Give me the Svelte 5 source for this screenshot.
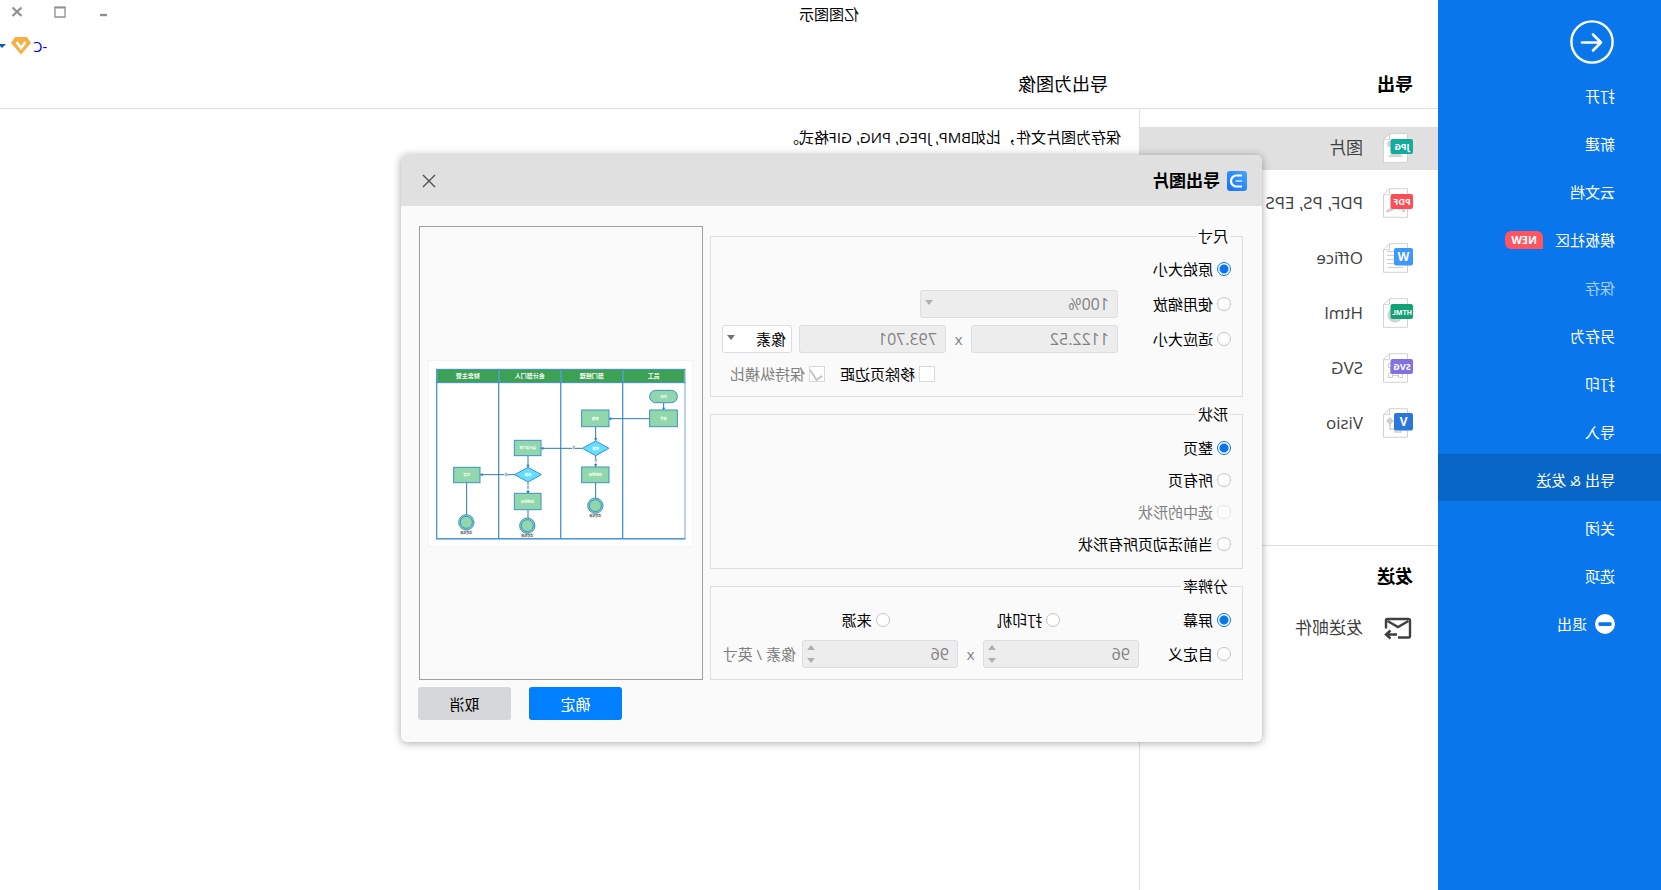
<script lang="ts">
  const menu = [
    { label: '打开' },
    { label: '新建' },
    { label: '云文档' },
    { label: '模板社区', badge: 'NEW' },
    { label: '保存', disabled: true },
    { label: '另存为' },
    { label: '打印' },
    { label: '导入' },
    { label: '导出 & 发送' },
    { label: '关闭' },
    { label: '选项' },
    { label: '退出', icon: true },
  ]

  const formats = [
    { label: '图片', tag: 'JPG', color: '#14ab9c' },
    { label: 'PDF, PS, EPS', tag: 'PDF', color: '#ff4d55' },
    { label: 'Office', tag: 'W', color: '#3e98fc' },
    { label: 'Html', tag: 'HTML', color: '#12a275' },
    { label: 'SVG', tag: 'SVG', color: '#8371e2' },
    { label: 'Visio', tag: 'V', color: '#2b76d9' },
  ]

  const shapes = [
    { value: 'page', label: '整页' },
    { value: 'all', label: '所有页' },
    { value: 'selected', label: '选中的形状', disabled: true },
    { value: 'active', label: '当前活动页所有形状' },
  ]

  const lanes = [
    { x: 118, label: '员工' },
    { x: 304, label: '部门经理' },
    { x: 490, label: '会计部门人' },
    { x: 676, label: '财务主管' },
  ]

  const boxes = [
    { x: 47, y: 150, w: 83, h: 50, label: '填写' },
    { x: 252, y: 150, w: 82, h: 50, label: '审核' },
    { x: 252, y: 321, w: 82, h: 47, label: '说明原因' },
    { x: 456, y: 241, w: 80, h: 46, label: '会计部门审' },
    { x: 456, y: 400, w: 80, h: 49, label: '说明原因' },
    { x: 639, y: 322, w: 79, h: 46, label: '付款' },
  ]

  const diamonds = [
    { x: 292, y: 265 },
    { x: 495, y: 344 },
  ]

  const ends = [
    { x: 293, y: 437 },
    { x: 497, y: 497 },
    { x: 680, y: 487 },
  ]

  let activeMenu = $state('导出 & 发送')
  let activeFormat = $state('图片')
  let size = $state('original')
  let shape = $state('page')
  let resolution = $state('screen')
  let removeMargin = $state(false)
  let unit = $state('像素')
  let open = $state(true)
</script>

<div class="app" lang="zh-CN">
  <nav class="sidebar">
    <button class="back" aria-label="返回">
      <svg width="44" height="44" viewBox="0 0 44 44" fill="none" stroke="#fff" stroke-width="2.4">
        <circle cx="22" cy="22" r="20.6" />
        <path d="M32 22.5H14M21 14.5l-8 8 8 8" stroke-linecap="round" stroke-linejoin="round" stroke-width="2.6" />
      </svg>
    </button>
    {#each menu as item}
      <button
        class="menu-item"
        class:active={activeMenu === item.label}
        disabled={item.disabled}
        onclick={() => (activeMenu = item.label)}
      >
        {#if item.icon}
          <svg width="20" height="20" viewBox="0 0 20 20">
            <circle cx="10" cy="10" r="10" fill="#fff" />
            <rect x="3.5" y="8.3" width="13" height="3.6" rx="1" fill="#0977eb" />
          </svg>
        {/if}
        <span>{item.label}</span>
        {#if item.badge}<span class="badge">{item.badge}</span>{/if}
      </button>
    {/each}
  </nav>

  <div class="main">
    <header>
      <div class="titlebar">
        <span class="title">亿图图示</span>
        <div class="controls">
          <button aria-label="最小化">
            <svg width="12" height="12" viewBox="0 0 12 12"><path d="M2 9h7" stroke="#909090" stroke-width="2.4" /></svg>
          </button>
          <button aria-label="最大化">
            <svg width="12" height="12" viewBox="0 0 12 12"><path d="M1 1.5h10v9.5H1z" fill="none" stroke="#909090" stroke-width="1.3" /><path d="M.4 1.4h11.2" stroke="#909090" stroke-width="1.8" /></svg>
          </button>
          <button aria-label="关闭">
            <svg width="12" height="12" viewBox="0 0 12 12"><path d="M1.5 1.5l9 8.5M10.5 1.5l-9 8.5" stroke="#909090" stroke-width="2.2" /></svg>
          </button>
        </div>
      </div>
      <div class="account">
        <a href="#account">-C</a>
        <svg width="20" height="18" viewBox="0 0 20 18">
          <path d="M4 0h12l4 6-10 11.5L0 6z" fill="#f3b044" />
          <path d="M5.5 5l4.5 6L14.5 5" fill="none" stroke="#fff" stroke-width="2.6" />
        </svg>
        <svg class="account-caret" width="6" height="4" viewBox="0 0 6 4"><path d="M0 0h8L4 4z" fill="#0a5cb8" /></svg>
      </div>
      <div class="headings">
        <h2>导出</h2>
        <h1>导出为图像</h1>
      </div>
    </header>

    <div class="columns">
      <aside>
        <ul>
          {#each formats as f}
            <li>
              <button class="format" class:active={activeFormat === f.label} onclick={() => (activeFormat = f.label)}>
                <svg width="30" height="30" viewBox="0 0 30 30">
                  <path d="M5.5 .7h18l6 6v22.6h-24z" fill="#fff" stroke="#d2d2d2" />
                  <path d="M23.5 .7v6h6" fill="none" stroke="#d2d2d2" />
                  {#if f.tag === 'JPG'}
                    <path d="M9 24c3-1 4-6 8-6s5 5 9 6z" fill="#d5d5d5" />
                    <circle cx="23" cy="11" r="3" fill="#d5d5d5" />
                  {:else if f.tag === 'PDF'}
                    <path d="M9 24c1-5 4-5 6-3M20 22c2-1 5 0 6 2" fill="none" stroke="#d0d0d0" stroke-width="3" />
                  {:else if f.tag === 'W'}
                    <path d="M10 24.5h15M18 8.5h8M18 12.5h8M18 16.5h8M18 20.5h8" stroke="#d0d0d0" />
                  {:else if f.tag === 'HTML'}
                    <circle cx="18" cy="17" r="7.5" fill="#d2d2d2" />
                  {:else if f.tag === 'SVG'}
                    <path d="M10.5 20.5h4v4h-4zM20.5 20.5h4v4h-4zM20.5 10.5h4v4h-4zM14.5 22.5h6M22.5 14v6" fill="none" stroke="#cfcfcf" />
                  {:else}
                    <path d="M12 21v3h6v-3M23 12v9h-5" fill="none" stroke="#cfcfcf" stroke-width="1.5" />
                    <path d="M23 9l4 4-4 4-4-4z" fill="#cfcfcf" />
                  {/if}
                  {#if f.tag.length === 1}
                    <rect y="5" width="19" height="17.5" rx="2" fill={f.color} />
                    <text x="9.5" y="18" class="tag-big">{f.tag}</text>
                  {:else}
                    <rect y="6" width="22.5" height="15" rx="2" fill={f.color} />
                    <text x="11" y="17" class="tag" class:long={f.tag.length > 3}>{f.tag}</text>
                  {/if}
                </svg>
                <span>{f.label}</span>
              </button>
            </li>
          {/each}
        </ul>
        <section class="send">
          <h2>发送</h2>
          <button class="format">
            <svg width="30" height="30" viewBox="0 0 30 30" fill="none" stroke="#404040" stroke-width="2.4">
              <path d="M15 24.5H4.5A1.5 1.5 0 0 1 3 23V7.5A1.5 1.5 0 0 1 4.5 6h21A1.5 1.5 0 0 1 27 7.5v8" />
              <path d="M4.5 8L15 14 25.500 8" />
              <path d="M16 21.5h10.5M22.5 17.5l4.5 4-4.5 4" />
            </svg>
            <span>发送邮件</span>
          </button>
        </section>
      </aside>
      <p class="desc">保存为图片文件，比如BMP, JPEG, PNG, GIF格式。</p>
    </div>
  </div>

  {#if open}
    <div class="overlay">
      <div class="dialog" role="dialog" aria-labelledby="dialog-title">
        <div class="dialog-head">
          <svg width="20" height="20" viewBox="0 0 20 20">
            <defs>
              <linearGradient id="logo" x1="0" y1="0" x2="1" y2="1">
                <stop offset="0" stop-color="#45a5ff" />
                <stop offset="1" stop-color="#1272f5" />
              </linearGradient>
            </defs>
            <rect width="20" height="20" rx="3" fill="url(#logo)" />
            <path d="M5 4.5h5.5a5.5 5.5 0 0 1 0 11H5" fill="none" stroke="#fff" stroke-width="2.2" />
            <path d="M5 10h6.5" stroke="#a8d2ff" stroke-width="1.8" />
          </svg>
          <h3 id="dialog-title">导出图片</h3>
          <button class="close" aria-label="关闭" onclick={() => (open = false)}>
            <svg width="14" height="14" viewBox="0 0 14 14"><path d="M1 1l12 12M13 1L1 13" stroke="#505050" stroke-width="1.4" /></svg>
          </button>
        </div>

        <div class="dialog-body">
          <div class="settings">
            <fieldset class="size">
              <legend>尺寸</legend>
              <label class="choice"><input type="radio" value="original" bind:group={size} />原始大小</label>
              <div class="row">
                <label class="choice first"><input type="radio" value="scale" bind:group={size} />使用缩放</label>
                <span class="select wide">
                  <select disabled={size !== 'scale'} aria-label="缩放"><option>100%</option></select>
                </span>
              </div>
              <div class="row">
                <label class="choice first"><input type="radio" value="fit" bind:group={size} />适应大小</label>
                <input class="field" value="1122.52" disabled={size !== 'fit'} aria-label="宽度" />
                <span class="times">x</span>
                <input class="field" value="793.701" disabled={size !== 'fit'} aria-label="高度" />
                <span class="select unit">
                  <select bind:value={unit} aria-label="单位"><option>像素</option><option>英寸</option></select>
                </span>
              </div>
              <div class="row checks">
                <label class="choice"><input type="checkbox" bind:checked={removeMargin} />移除页边距</label>
                <label class="choice disabled"><input type="checkbox" checked disabled />保持纵横比</label>
              </div>
            </fieldset>

            <fieldset class="shape">
              <legend>形状</legend>
              {#each shapes as s}
                <label class="choice" class:disabled={s.disabled}>
                  <input type="radio" value={s.value} disabled={s.disabled} bind:group={shape} />{s.label}
                </label>
              {/each}
            </fieldset>

            <fieldset class="resolution">
              <legend>分辨率</legend>
              <div class="thirds">
                <label class="choice"><input type="radio" value="screen" bind:group={resolution} />屏幕</label>
                <label class="choice"><input type="radio" value="printer" bind:group={resolution} />打印机</label>
                <label class="choice"><input type="radio" value="source" bind:group={resolution} />来源</label>
              </div>
              <div class="row">
                <label class="choice custom"><input type="radio" value="custom" bind:group={resolution} />自定义</label>
                <span class="spin"><input class="field" type="number" value="96" disabled={resolution !== 'custom'} aria-label="水平分辨率" /></span>
                <span class="times">x</span>
                <span class="spin"><input class="field" type="number" value="96" disabled={resolution !== 'custom'} aria-label="垂直分辨率" /></span>
                <span class="dpi">像素 / 英寸</span>
              </div>
            </fieldset>
          </div>

          <div class="preview">
            <svg width="265" height="187" viewBox="0 0 795 561">
              <rect x="1" y="1" width="793" height="559" fill="#fff" stroke="#f2f2f2" stroke-width="3" />
              <rect x="24" y="28" width="745" height="40" fill="#3ca055" />
              <path d="M24 27V537H769V27M211 27V537M397 27V537M583 27V537" fill="none" stroke="#8fbfe8" stroke-width="4" />
              <path d="M23 28H770M23 68H770M211 27V537M397 27V537M583 27V537M769 27V537M24 536H769" fill="none" stroke="#3f8fd0" stroke-width="3" />
              {#each lanes as lane}
                <text x={lane.x} y="54" class="lane">{lane.label}</text>
              {/each}
              <g stroke="#2a7ab8" stroke-width="3" fill="none">
                <path d="M88 128V150M130 176H252M292 200V243M292 287V321M333 265H456M292 368V414" />
                <path d="M495 287V321M495 367V400M534 344H639M495 449V474M679 368V464" />
              </g>
              <g fill="#2a7ab8">
                <path d="M83 143h10l-5 8zM287 235h10l-5 8zM287 313h10l-5 8zM490 314h10l-5 8zM490 393h10l-5 8zM245 171v10l8-5zM449 260v10l8-5zM631 339v10l8-5z" />
              </g>
              <rect x="47" y="91" width="83" height="37" rx="18" class="node" />
              <text x="88" y="113" class="node-text">开始</text>
              {#each boxes as b}
                <rect x={b.x} y={b.y} width={b.w} height={b.h} class="node" />
                <text x={b.x + b.w / 2} y={b.y + b.h / 2 + 4} class="node-text">{b.label}</text>
              {/each}
              {#each diamonds as d}
                <path d="M{d.x - 40} {d.y}l40 -22 40 22 -40 22z" class="decision" />
                <text x={d.x} y={d.y + 4} class="node-text">审核</text>
                <rect x={d.x - 6} y={d.y + 32} width="12" height="13" fill="#fff" />
                <text x={d.x} y={d.y + 42} class="note faint">否</text>
                <rect x={d.x + 62} y={d.y - 5} width="9" height="10" fill="#fff" />
                <text x={d.x + 66} y={d.y + 3} class="note faint">是</text>
              {/each}
              {#each ends as e}
                <circle cx={e.x} cy={e.y} r="23" class="node" />
                <circle cx={e.x} cy={e.y} r="18" class="node" />
                <text x={e.x} y={e.y + 34} class="note">流程结束</text>
              {/each}
            </svg>
          </div>
        </div>

        <div class="actions">
          <button class="ok">确定</button>
          <button onclick={() => (open = false)}>取消</button>
        </div>
      </div>
    </div>
  {/if}
</div>

<style>
  :global(body) { margin: 0; background: #fff; }

  /* the window is laid out left to right and shown flipped */
  .app {
    position: relative;
    display: flex;
    min-height: 100vh;
    overflow: hidden;
    transform: scaleX(-1);
    background: #fff;
    color: #000;
    font-family: "Open Sans", "Noto Sans CJK SC", sans-serif;
    font-size: 15px;
    line-height: 20px;
  }

  * { box-sizing: border-box; }
  h1, h2, h3, p, ul { margin: 0; padding: 0; }
  ul { list-style: none; }
  svg { display: block; flex-shrink: 0; }

  button {
    margin: 0;
    padding: 0;
    border: none;
    background: none;
    color: inherit;
    font: inherit;
    cursor: pointer;
  }

  .sidebar {
    flex: 0 0 223px;
    display: flex;
    flex-direction: column;
    gap: 1px;
    padding-top: 20px;
    background: #0977eb;
    color: #fff;
  }

  .back { margin: 0 0 5px 47px; align-self: flex-start; }

  .menu-item {
    display: flex;
    align-items: center;
    gap: 8px;
    height: 47px;
    padding: 4px 0 0 46px;
    text-align: left;
  }

  .menu-item.active { background: #0766c6; }
  .menu-item:disabled { color: #a5cdf8; }

  .badge {
    margin-left: 4px;
    padding: 0 6px;
    border-radius: 6px 6px 6px 0;
    background: #ff5560;
    font-size: 11px;
    font-weight: 700;
    line-height: 18px;
  }

  .main {
    flex: 1;
    display: flex;
    flex-direction: column;
    min-width: 0;
  }

  header { border-bottom: 1px solid #dfdfdf; }
  .titlebar { display: flex; align-items: center; height: 28px; }
  .title { flex: 1; text-align: center; }

  .controls {
    display: flex;
    justify-content: flex-end;
    align-self: flex-start;
    gap: 9px;
    width: 220px;
  }

  .controls button {
    display: flex;
    justify-content: center;
    align-items: center;
    width: 34px;
    height: 24px;
  }

  .account {
    display: flex;
    justify-content: flex-end;
    align-items: center;
    gap: 2px;
    height: 36px;
  }

  .account a { color: #00f; text-decoration: none; }
  .account-caret { margin-left: 3px; }

  .headings { display: flex; height: 44px; line-height: 40px; }
  h2 { font-size: 18px; font-weight: 700; }
  .headings h2 { width: 299px; padding-left: 25px; }
  h1 { padding-left: 31px; font-size: 18px; font-weight: 400; }

  .columns { flex: 1; display: flex; }

  aside {
    flex: 0 0 299px;
    padding-top: 18px;
    border-right: 1px solid #dfdfdf;
  }

  aside ul {
    display: flex;
    flex-direction: column;
    gap: 12px;
    height: 418px;
  }

  .format {
    display: flex;
    align-items: center;
    gap: 20px;
    width: 100%;
    height: 43px;
    padding: 0 0 1px 25px;
    color: #404040;
    font-size: 17px;
  }

  .format.active { background: #e0e0e0; }

  .tag, .tag-big {
    fill: #fff;
    font-size: 9px;
    font-weight: 700;
    text-anchor: middle;
  }

  .tag.long { font-size: 7px; }
  .tag-big { font-size: 12px; }

  .send { border-top: 1px solid #dfdfdf; padding-top: 20px; }
  .send h2 { padding-left: 25px; }
  .send .format { margin-top: 21px; }

  .desc { padding: 18px 0 0 18px; }

  .overlay {
    position: absolute;
    inset: 0;
    display: flex;
    justify-content: center;
    align-items: center;
    padding: 7px 2px 0 0;
  }

  .dialog {
    width: 861px;
    border-radius: 6px;
    overflow: hidden;
    background: #fafafa;
    box-shadow: 0 1px 8px rgba(0, 0, 0, 0.35);
  }

  .dialog-head {
    display: flex;
    align-items: center;
    gap: 7px;
    height: 51px;
    padding: 0 20px 0 15px;
    background: #e0e0e0;
  }

  h3 { flex: 1; font-size: 17px; font-weight: 700; }
  .close { padding: 1px; }

  .dialog-body {
    display: flex;
    gap: 7px;
    padding: 20px 18px 7px 19px;
  }

  .settings {
    flex: 1;
    display: flex;
    flex-direction: column;
    gap: 7px;
    min-width: 0;
  }

  fieldset {
    display: flex;
    flex-direction: column;
    min-width: 0;
    margin: 0;
    border: 1px solid #dfdfdf;
  }

  legend { margin-left: 1px; padding: 0 2px; }

  .size { gap: 7px; padding: 9px 10px 8px 11px; }
  .size > * { height: 28px; }
  .size legend { height: 20px; }
  .shape { gap: 12px; padding: 14px 11px; }
  .resolution { gap: 10px; padding: 14px 8px 11px 11px; }

  .row { display: flex; align-items: center; }
  .row > * { flex-shrink: 0; }

  .choice {
    display: flex;
    align-items: center;
    gap: 4px;
    white-space: nowrap;
  }

  .choice.first { width: 113px; }
  .choice.custom { width: 92px; }
  .choice.disabled { color: #808080; }

  input[type='radio'], input[type='checkbox'] {
    appearance: none;
    flex-shrink: 0;
    width: 14px;
    height: 14px;
    margin: 0;
    border: 1px solid #c4c4c4;
    border-radius: 50%;
    background: #fff;
  }

  input[type='radio']:checked {
    border-color: #0977eb;
    background: radial-gradient(circle, #0977eb 4px, #fff 5px);
  }

  input[type='radio']:disabled { border-color: #e2e2e2; }

  input[type='checkbox'] {
    width: 16px;
    height: 16px;
    border-color: #d9d9dc;
    border-radius: 0;
  }

  input[type='checkbox']:checked::before {
    content: '';
    display: block;
    width: 6px;
    height: 11px;
    margin: 0 0 0 4px;
    border: solid #c8c8c8;
    border-width: 0 2px 2px 0;
    transform: rotate(34deg);
  }

  .checks { gap: 15px; padding-left: 296px; }

  .field, select {
    width: 147px;
    height: 28px;
    margin: 0;
    padding: 0 8px;
    border: 1px solid #dcdde1;
    border-radius: 3px;
    background: #fff;
    color: #000;
    font: inherit;
    outline: none;
  }

  .field { font-size: 16px; }

  .field:disabled, select:disabled {
    background: #ededed;
    color: #808080;
    opacity: 1;
  }

  select { width: 100%; appearance: none; padding: 0 5px; }
  .select { position: relative; }
  .wide { width: 198px; }
  .wide select { padding: 0 8px; font-size: 16px; }
  .unit { width: 70px; margin-left: 7px; }

  .select::after {
    content: '';
    position: absolute;
    top: 10px;
    right: 5px;
    border: 4px solid transparent;
    border-top: 5px solid #707070;
    border-bottom: none;
    pointer-events: none;
  }

  .wide::after { border-top-color: #b0b0b0; }

  .times {
    width: 25px;
    color: #808080;
    text-align: center;
  }

  .thirds { display: flex; }
  .thirds .choice { width: 174px; }

  .spin { position: relative; }
  .spin .field { width: 156px; appearance: textfield; }
  .spin .field::-webkit-inner-spin-button { appearance: none; }

  .spin::before, .spin::after {
    content: '';
    position: absolute;
    right: 5px;
    border: 4px solid transparent;
  }

  .spin::before { top: 5px; border-top: none; border-bottom: 5px solid #b0b0b0; }
  .spin::after { bottom: 5px; border-bottom: none; border-top: 5px solid #b0b0b0; }

  .dpi { margin-left: 6px; color: #808080; white-space: nowrap; }

  .preview {
    flex: 0 0 284px;
    display: flex;
    justify-content: center;
    align-items: center;
    border: 1px solid #a0a0a0;
  }

  .node { fill: #90d7ab; stroke: #3f8fd0; stroke-width: 3px; }
  .decision { fill: #63e0ff; stroke: #3f8fd0; stroke-width: 3px; }

  .lane, .node-text, .note {
    fill: #fff;
    font-size: 18px;
    font-weight: 700;
    text-anchor: middle;
  }

  .node-text { font-size: 10px; }
  .note { fill: #505050; font-size: 9px; }
  .note.faint { fill: #909090; }

  .actions {
    display: flex;
    justify-content: flex-end;
    gap: 18px;
    padding: 0 17px 22px;
  }

  .actions button {
    width: 93px;
    height: 33px;
    border-radius: 3px;
    background: #d6d7db;
  }

  .actions .ok { background: #007fff; color: #fff; }
</style>
